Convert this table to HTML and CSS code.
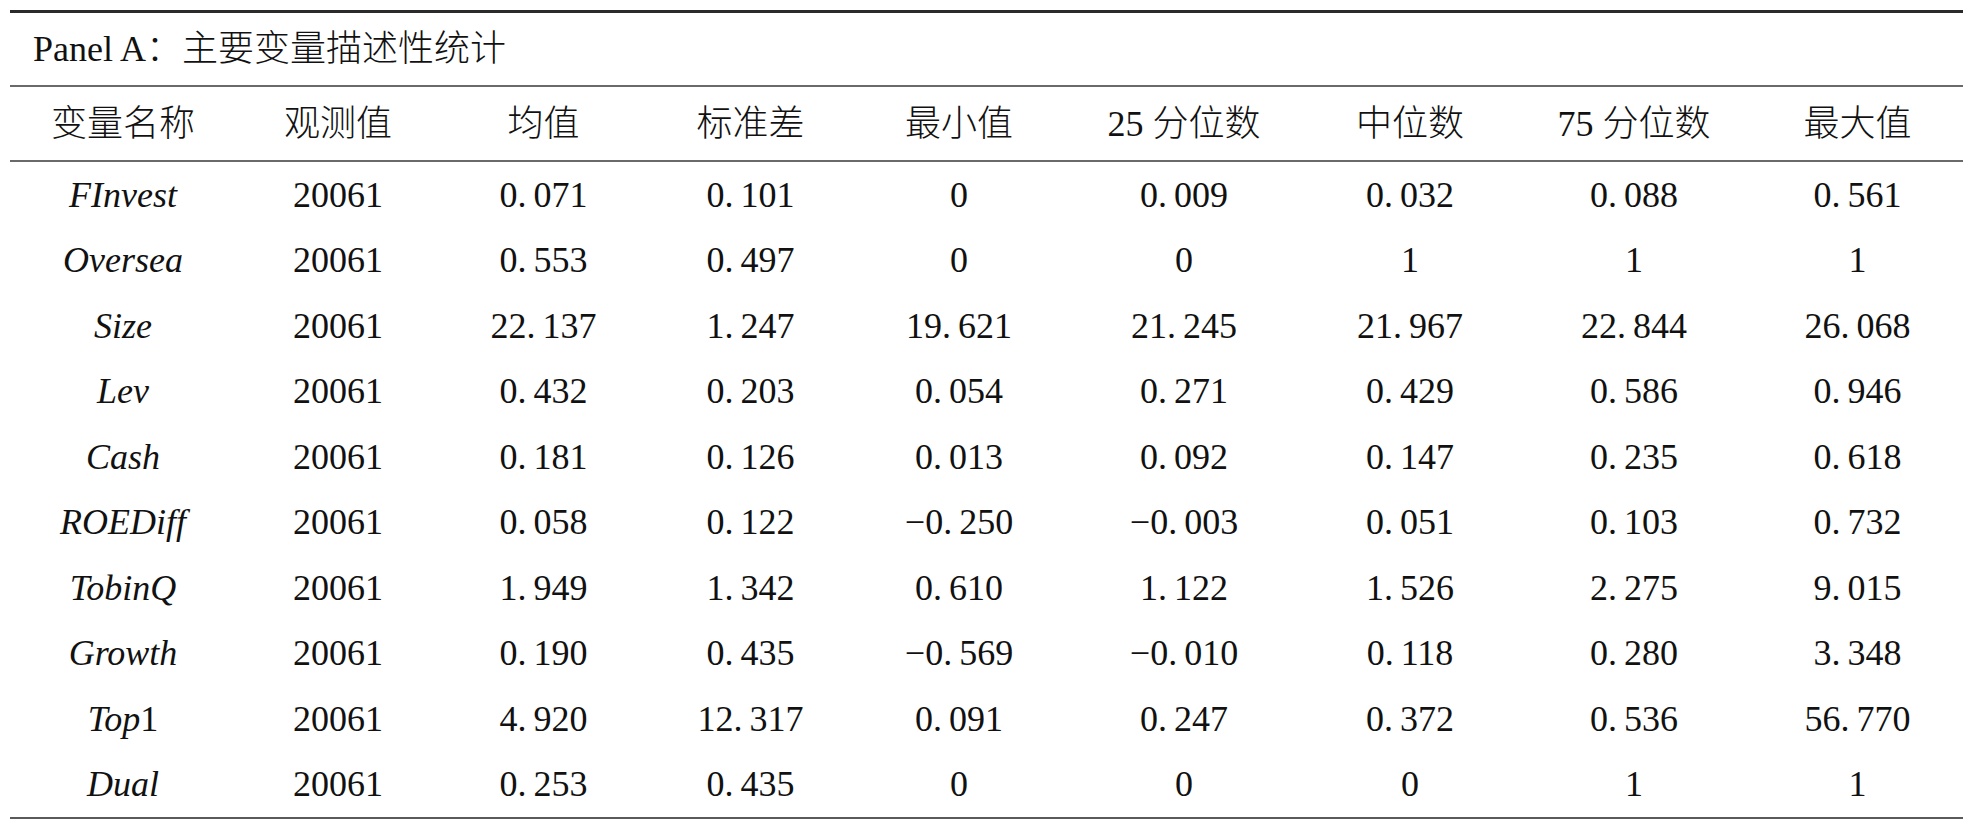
FILE: index.html
```html
<!DOCTYPE html>
<html lang="zh-CN">
<head>
<meta charset="utf-8">
<title>Panel A：主要变量描述性统计</title>
<link rel="stylesheet" href="styles.css">
</head>
<body>
<div class="page">
<table class="stats">
  <colgroup>
    <col class="c1"><col class="c2"><col class="c3"><col class="c4"><col class="c5"><col class="c6"><col class="c7"><col class="c8"><col class="c9">
  </colgroup>
  <thead>
    <tr class="panel"><th colspan="9"><span class="lat">Panel A</span>：主要变量描述性统计</th></tr>
    <tr class="head">
      <th>变量名称</th><th>观测值</th><th>均值</th><th>标准差</th><th>最小值</th><th><span class="lat">25</span> 分位数</th><th>中位数</th><th><span class="lat">75</span> 分位数</th><th>最大值</th>
    </tr>
  </thead>
  <tbody>
    <tr><td><i class="var">FInvest</i></td><td>20061</td><td>0. 071</td><td>0. 101</td><td>0</td><td>0. 009</td><td>0. 032</td><td>0. 088</td><td>0. 561</td></tr>
    <tr><td><i class="var">Oversea</i></td><td>20061</td><td>0. 553</td><td>0. 497</td><td>0</td><td>0</td><td>1</td><td>1</td><td>1</td></tr>
    <tr><td><i class="var">Size</i></td><td>20061</td><td>22. 137</td><td>1. 247</td><td>19. 621</td><td>21. 245</td><td>21. 967</td><td>22. 844</td><td>26. 068</td></tr>
    <tr><td><i class="var">Lev</i></td><td>20061</td><td>0. 432</td><td>0. 203</td><td>0. 054</td><td>0. 271</td><td>0. 429</td><td>0. 586</td><td>0. 946</td></tr>
    <tr><td><i class="var">Cash</i></td><td>20061</td><td>0. 181</td><td>0. 126</td><td>0. 013</td><td>0. 092</td><td>0. 147</td><td>0. 235</td><td>0. 618</td></tr>
    <tr><td><i class="var">ROEDiff</i></td><td>20061</td><td>0. 058</td><td>0. 122</td><td>−0. 250</td><td>−0. 003</td><td>0. 051</td><td>0. 103</td><td>0. 732</td></tr>
    <tr><td><i class="var">TobinQ</i></td><td>20061</td><td>1. 949</td><td>1. 342</td><td>0. 610</td><td>1. 122</td><td>1. 526</td><td>2. 275</td><td>9. 015</td></tr>
    <tr><td><i class="var">Growth</i></td><td>20061</td><td>0. 190</td><td>0. 435</td><td>−0. 569</td><td>−0. 010</td><td>0. 118</td><td>0. 280</td><td>3. 348</td></tr>
    <tr><td><i class="var">Top</i>1</td><td>20061</td><td>4. 920</td><td>12. 317</td><td>0. 091</td><td>0. 247</td><td>0. 372</td><td>0. 536</td><td>56. 770</td></tr>
    <tr><td><i class="var">Dual</i></td><td>20061</td><td>0. 253</td><td>0. 435</td><td>0</td><td>0</td><td>0</td><td>1</td><td>1</td></tr>
  </tbody>
</table>
</div>
</body>
</html>
```

FILE: styles.css
```css
html, body {
  margin: 0;
  padding: 0;
  background: #ffffff;
}

.page {
  padding: 10px 8px 0 10px;
}

.stats {
  width: 1953px;
  table-layout: fixed;
  border-collapse: collapse;
  font-family: "Liberation Serif", "Noto Sans CJK SC", serif;
  font-size: 36px;
  font-weight: 300;
  color: #111111;
  border-top: 3px solid #2a2a2a;
  border-bottom: 2px solid #5a5a5a;
}

.c1 { width: 226px; }
.c2 { width: 204px; }
.c3 { width: 207px; }
.c4 { width: 207px; }
.c5 { width: 210px; }
.c6 { width: 240px; }
.c7 { width: 212px; }
.c8 { width: 236px; }
.c9 { width: 211px; }

.stats th,
.stats td {
  padding: 0;
  text-align: center;
  vertical-align: middle;
  font-weight: 300;
  line-height: 40px;
  white-space: nowrap;
}

.stats td {
  word-spacing: -2px;
}

.lat {
  font-family: "Liberation Serif", serif;
  font-weight: 400;
}

.panel th {
  height: 72px;
  text-align: left;
  padding-left: 23px;
  border-bottom: 2px solid #6a6a6a;
}

.head th {
  height: 73px;
  border-bottom: 2px solid #6a6a6a;
}

.stats tbody td {
  height: 65.5px;
}

.var {
  font-style: italic;
}
```
